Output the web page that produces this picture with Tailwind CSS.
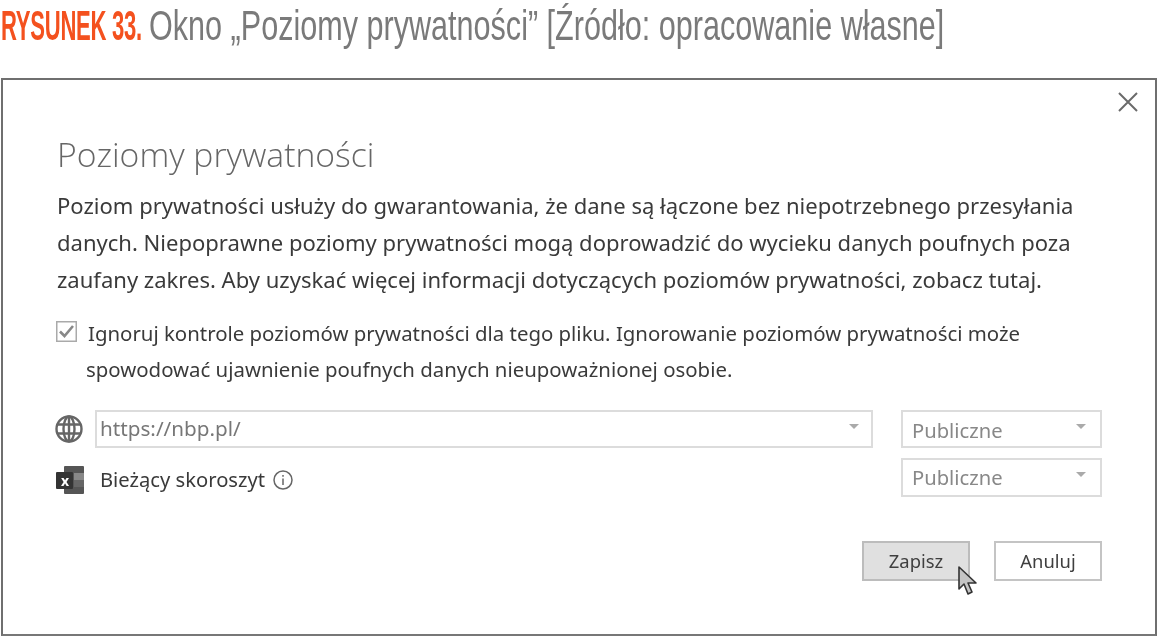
<!doctype html>
<html lang="pl"><head><meta charset="utf-8"><script src="https://cdn.jsdelivr.net/npm/@tailwindcss/browser@4"></script></head>
<body class="bg-white w-[1158px] h-[637px] overflow-hidden font-['Noto_Sans','Open_Sans',sans-serif]">
<div class="blur-[0.4px]">
<div class="h-[78px] pl-[1px] pt-[2px] flex whitespace-nowrap font-['Liberation_Sans',sans-serif] text-[42px] leading-[48px]">
  <span class="font-bold text-[#f4511e] w-[143px] inline-block origin-left scale-x-[0.525] tracking-[-0.5px]">RYSUNEK 33.</span>
  <span class="text-[#7a7a7a] ml-[5px] inline-block origin-left scale-x-[0.728]">Okno „Poziomy prywatności” [Źródło: opracowanie własne]</span>
</div>
<div class="relative ml-[1px] w-[1156px] h-[558px] border-2 border-[#6f6f6f] border-b-[#777] px-[54px] text-[#333]">
  <svg class="absolute right-[16px] top-[11px]" width="22" height="22" viewBox="0 0 22 22" fill="none" stroke="#6a6a6a" stroke-width="2"><path d="M2 2 L20 20 M20 2 L2 20"/></svg>
  <h1 class="pt-[49px] text-[33.7px] leading-[50px] font-light text-[#666] font-['Open_Sans','Noto_Sans',sans-serif]">Poziomy prywatności</h1>
  <p class="mt-[8px] text-[22.04px] leading-[37px] text-[#3a3a3a] w-[1060px] whitespace-nowrap">Poziom prywatności usłuży do gwarantowania, że dane są łączone bez niepotrzebnego przesyłania<br>danych. Niepoprawne poziomy prywatności mogą doprowadzić do wycieku danych poufnych poza<br>zaufany zakres. Aby uzyskać więcej informacji dotyczących poziomów prywatności, zobacz tutaj.</p>
  <div class="mt-[17px] flex gap-[11px] -ml-[1px]">
    <svg class="mt-[6px] shrink-0" width="21" height="21" viewBox="0 0 21 21" fill="none"><rect x="0.75" y="0.75" width="19.5" height="19.5" fill="#fff" stroke="#aaa" stroke-width="1.5"/><path d="M4 10.5 L8.5 15 L17 5" stroke="#888" stroke-width="2.6"/></svg>
    <p class="text-[20.4px] leading-[36px] text-[#3a3a3a] whitespace-nowrap">Ignoruj kontrole poziomów prywatności dla tego pliku. Ignorowanie poziomów prywatności może<br><span class="-ml-[2px]">spowodować ujawnienie poufnych danych nieupoważnionej osobie.</span></p>
  </div>
  <div class="mt-[23px] flex items-center h-[38px] -ml-[2px] -mr-[1px]">
    <svg class="shrink-0" width="28" height="28" viewBox="0 0 28 28" fill="none" stroke="#666" stroke-width="2.4"><circle cx="14" cy="14" r="12.5"/><ellipse cx="14" cy="14" rx="5.5" ry="12.5"/><path d="M14 1.5V26.5M2.5 9.5H25.5M2.5 18.5H25.5"/></svg>
    <div class="ml-[12px] w-[778px] h-[38px] border-2 border-[#dcdcdc] flex items-center justify-between pl-[3px] pr-[12px]">
      <span class="text-[20.7px] text-[#777]">https://nbp.pl/</span><span class="w-0 h-0 border-x-[5px] border-x-transparent border-t-[5px] border-t-[#aaa] mb-[6px]"></span>
    </div>
    <div class="ml-[28px] w-[201px] h-[38px] border-2 border-[#dcdcdc] flex items-center justify-between pl-[9px] pr-[14px]">
      <span class="text-[20.2px] text-[#888] mt-[2px]">Publiczne</span><span class="w-0 h-0 border-x-[5px] border-x-transparent border-t-[5px] border-t-[#aaa] mb-[6px]"></span>
    </div>
  </div>
  <div class="relative mt-[10px] flex items-center h-[39px] -ml-[2px] -mr-[1px]">
    <svg class="shrink-0 mt-[5px]" width="30" height="30" viewBox="0 0 30 30"><rect x="9" y="1" width="20" height="28" rx="1" fill="#555"/><rect x="19" y="8" width="10" height="7" fill="#888"/><rect x="19" y="15" width="10" height="7" fill="#666"/><rect x="1" y="7" width="17" height="17" rx="1" fill="#333"/></svg>
    <span class="absolute left-[6px] top-[16px] text-[14px] font-bold text-white leading-none">x</span>
    <span class="ml-[15px] mt-[4px] text-[20.2px] text-[#3a3a3a]">Bieżący skoroszyt</span>
    <svg class="ml-[8px] mt-[4px] shrink-0" width="20" height="20" viewBox="0 0 20 20" fill="none" stroke="#666" stroke-width="1.5"><circle cx="10" cy="10" r="9"/><path d="M10 8.5V15M10 5V6.8"/></svg>
    <div class="ml-auto w-[201px] h-[39px] border-2 border-[#dcdcdc] flex items-center justify-between pl-[9px] pr-[14px]">
      <span class="text-[20.2px] text-[#888]">Publiczne</span><span class="w-0 h-0 border-x-[5px] border-x-transparent border-t-[5px] border-t-[#aaa] mb-[6px]"></span>
    </div>
  </div>
  <div class="mt-[44px] -mr-[1px] flex justify-end gap-[24px]">
    <button class="w-[108px] h-[40px] bg-[#e0e0e0] border-2 border-[#bcbcbc] text-[18.4px] text-[#3f3f3f]">Zapisz</button>
    <button class="w-[108px] h-[40px] bg-white border-2 border-[#c4c4c4] text-[18.4px] text-[#3f3f3f]">Anuluj</button>
  </div>
  <svg class="absolute left-[954px] top-[485px]" width="22" height="32" viewBox="0 0 22 32"><path d="M2 2 L2 24 L7 19 L11 29 L15 27 L11 18 L19 18 Z" fill="#c4c4c4" stroke="#333" stroke-width="1.6" stroke-linejoin="round"/></svg>
</div>
</div>
</body></html>
